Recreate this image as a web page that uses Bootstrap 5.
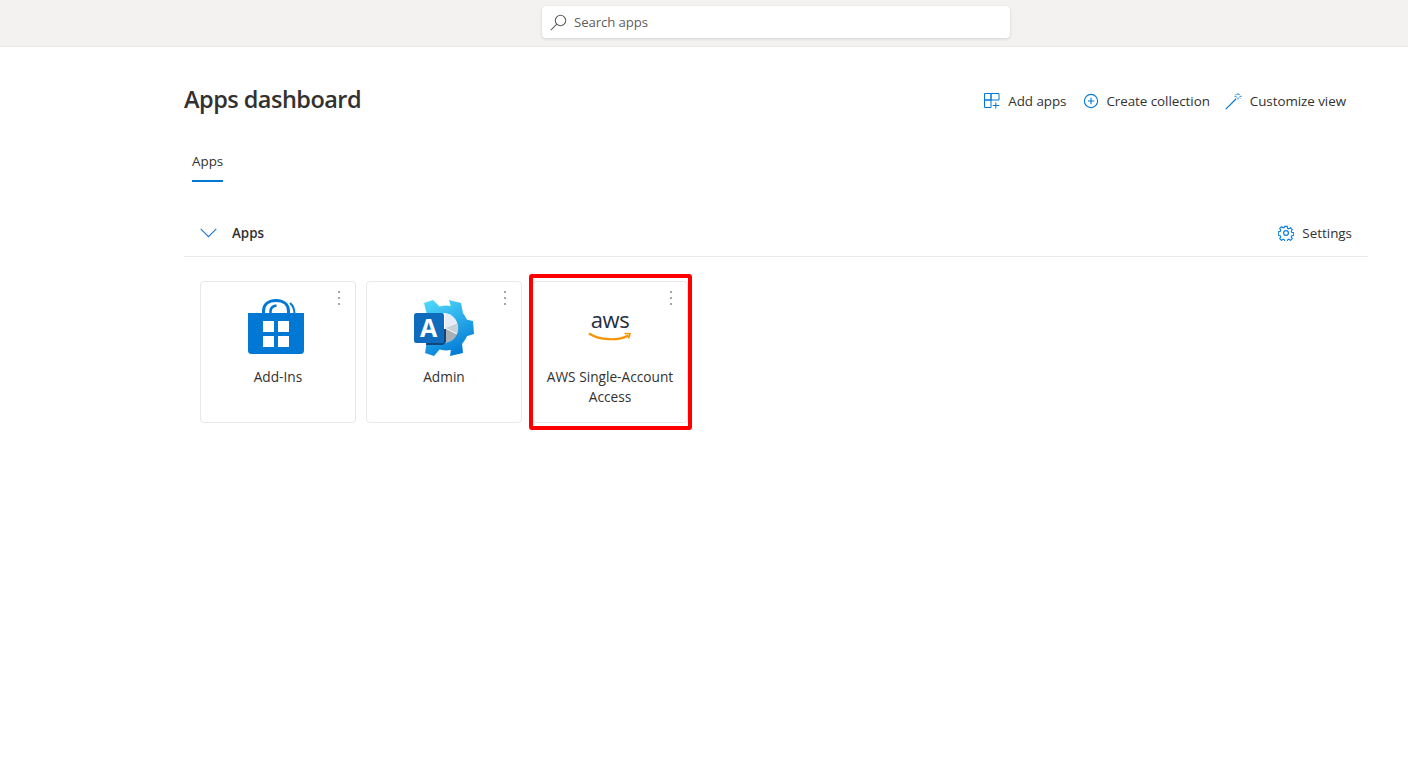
<!DOCTYPE html>
<html lang="en">
<head>
<meta charset="utf-8">
<title>Apps dashboard</title>
<link href="https://cdn.jsdelivr.net/npm/bootstrap@5.3.0/dist/css/bootstrap.min.css" rel="stylesheet">
<style>
html,body{height:100%;background:#fff}
body{font-family:"Open Sans","Noto Sans","Liberation Sans",sans-serif;font-size:14px;color:#323130;overflow:hidden}
.topstrip{height:47px;background:#f3f2f1;border-bottom:1px solid #e9e8e7;padding:6px 0 0 144px}
.searchbox{width:468px;height:32px;background:#fff;border-radius:4px;box-shadow:0 1px 3px rgba(0,0,0,.14);padding:1px 0 0 7px;gap:6px;color:#605e5c;font-size:13.2px;letter-spacing:-.1px}
.searchbox svg{margin-top:-1px}
.mainwrap{padding:0 40px 0 184px}
.headrow{height:106px}
.pagetitle{font-size:23.5px;font-weight:600;color:#323130;margin:0 0 2px;letter-spacing:-.52px}
.actionset{gap:15px;padding-right:22px;padding-top:3px}
.actionitem{gap:7px;font-size:13.4px;color:#323130;letter-spacing:-.05px}
.actionitem.firstaction{margin-right:2px}
.tabname{margin-left:8px;width:31px;height:29px;border-bottom:2px solid #0078d4;font-size:13.4px;line-height:16px;white-space:nowrap}
.sectionhead{margin-top:27px;height:48px;border-bottom:1px solid #edebe9;padding:1px 16px 0;font-size:13.4px}
.sectiontitle{font-weight:600;margin-left:15px}
.tilerow{gap:10px;padding:24px 0 0 16px}
.apptile{width:156px;height:142px;border:1px solid #e8e8e8;border-radius:4px;background:#fff;padding-top:17px;position:relative}
.tilelogo{height:58px;width:100%}
.tilename{font-size:13.7px;line-height:20px;margin-top:10px;padding:0 8px;text-align:center;color:#323130}
.tiledots{position:absolute;top:9px;right:15px;width:3px;display:flex;flex-direction:column;gap:4px;align-items:center}
.tiledots i{display:block;width:2px;height:2px;background:#8a8886;border-radius:50%}
.redmark{position:absolute;left:-4px;top:-8px;width:163px;height:156px;border:4px solid #fe0000;border-radius:3px;pointer-events:none}
.awsword{font-size:22px;line-height:22px;font-weight:500;color:#252f3e;letter-spacing:-.35px;font-family:"Open Sans",sans-serif}
.awslogo{padding-top:9px}
.awsarrow{margin-top:2px}
</style>
</head>
<body>
<header class="topstrip d-flex justify-content-center">
  <div class="searchbox d-flex align-items-center">
    <svg width="19" height="19" viewBox="0 0 19 19" fill="none" stroke="#605e5c" stroke-width="1.1"><circle cx="11.5" cy="7.500" r="5.200"/><path d="M7.800 11.200 1.800 17.200"/></svg>
    <span>Search apps</span>
  </div>
</header>

<main class="mainwrap">
  <div class="headrow d-flex justify-content-between align-items-center">
    <h1 class="pagetitle">Apps dashboard</h1>
    <div class="actionset d-flex align-items-center">
      <div class="actionitem firstaction d-flex align-items-center">
        <svg width="18" height="18" viewBox="0 0 18 18" fill="none" stroke="#0078d4" stroke-width="1"><path d="M1.500 1.500h6.500v6.500H1.500zM8 1.500h8v6.500H8zM1.500 8H8v7.500H1.500zM12.800 10.500v6M9.800 13.500h6.500"/></svg>
        <span>Add apps</span>
      </div>
      <div class="actionitem d-flex align-items-center">
        <svg width="16" height="16" viewBox="0 0 16 16" fill="none" stroke="#0078d4" stroke-width="1.1"><circle cx="8" cy="8" r="6.600"/><path d="M8 4.800v6.400M4.800 8h6.400"/></svg>
        <span>Create collection</span>
      </div>
      <div class="actionitem d-flex align-items-center">
        <svg width="18" height="18" viewBox="0 0 18 18" fill="none" stroke="#0078d4" stroke-width="1.200"><path d="M.8 17.200 11 7"/><path d="M13 1v2M13 5.500v2M9.500 4.300h2M14.500 4.300h2.200M10.600 2l1 1M14.600 2l-1 1M10.800 6.500l.8-.9M15.300 6.500l-.9-.9" stroke-width=".9"/></svg>
        <span>Customize view</span>
      </div>
    </div>
  </div>

  <div class="tabname">Apps</div>

  <div class="sectionhead d-flex align-items-center justify-content-between">
    <div class="d-flex align-items-center">
      <svg width="17" height="10" viewBox="0 0 17 10" fill="none" stroke="#1f78d1" stroke-width="1.100"><path d="M.7.8 8.500 8.600 16.300.8"/></svg>
      <span class="sectiontitle">Apps</span>
    </div>
    <div class="d-flex align-items-center gap-2">
      <svg width="16" height="16" viewBox="0 0 16 16" fill="none" stroke="#0f7fe0" stroke-width="1.200"><circle cx="8" cy="8" r="2.400"/><path d="M6.700 1h2.600l.4 2 1.300.6 1.800-1.100 1.800 1.800-1.100 1.800.6 1.300 2 .4v2.600l-2 .4-.6 1.300 1.100 1.800-1.800 1.800-1.800-1.100-1.300.6-.4 2H6.700l-.4-2-1.300-.6-1.800 1.100-1.800-1.800 1.100-1.800-.6-1.300-2-.4V6.700l2-.4.6-1.300-1.100-1.800 1.800-1.800 1.800 1.100 1.300-.6z" transform="translate(.4 .4) scale(.95)"/></svg>
      <span>Settings</span>
    </div>
  </div>

  <div class="tilerow d-flex">
    <div class="apptile">
      <div class="tiledots"><i></i><i></i><i></i></div>
      <div class="tilelogo d-flex justify-content-center">
        <svg width="60" height="56" viewBox="0 0 60 56" fill="none">
          <path d="M15.500 15V12C15.500 5 21 1.500 28 1.500S40.500 5 40.500 12V15" stroke="#0078d4" stroke-width="3"/>
          <path d="M22.500 15V12.500C22.500 9 25 7 28.500 6.500" stroke="#0078d4" stroke-width="2.500"/>
          <path d="M42 4C45 6.500 46.500 10 46.500 15" stroke="#0078d4" stroke-width="2"/>
          <path d="M0 14H56V51.500A3.500 3.500 0 0 1 52.500 55H3.500A3.500 3.500 0 0 1 0 51.500Z" fill="#0078d4"/>
          <path d="M15 22H26V33H15ZM30 22H41V33H30ZM15 37H26V48H15ZM30 37H41V48H30Z" fill="#fff"/>
        </svg>
      </div>
      <div class="tilename">Add-Ins</div>
    </div>

    <div class="apptile">
      <div class="tiledots"><i></i><i></i><i></i></div>
      <div class="tilelogo d-flex justify-content-center">
        <svg width="62" height="58" viewBox="0 0 62 58" fill="none">
          <defs>
            <linearGradient id="gearfill" gradientUnits="userSpaceOnUse" x1="18" y1="1" x2="44" y2="57"><stop offset="0" stop-color="#4fd8fb"/><stop offset="1" stop-color="#0078d4"/></linearGradient>
          </defs>
          <g fill="url(#gearfill)">
            <circle cx="33" cy="29" r="22.500"/>
            <path d="M11 4 20 1 27 8 14 16Z"/>
            <path d="M36 1 48 4 50 14 38 8Z"/>
            <path d="M51 20 60 22 61 35 51 38Z"/>
            <path d="M38 50 49 44 50 54 37 57Z"/>
            <path d="M14 42 27 50 21 57 12 54Z"/>
          </g>
          <path d="M30 14A15 15 0 0 1 30 44Z" fill="#fff"/>
          <path d="M32 14.200A15 15 0 0 1 44 23.500L32 29Z" fill="#e4edf7"/>
          <path d="M32.500 29 44.300 24A15 15 0 0 1 44.200 34.500Z" fill="#c8d1d8"/>
          <path d="M32 29.500 44 35.500A15 15 0 0 1 32 43.800Z" fill="#a8b0b6"/>
          <path d="M13 46H30L33 43V30L30 30V44H13Z" fill="#10467c"/>
          <rect x="1" y="14" width="30" height="30" rx="2.500" fill="#0f6cbd"/>
          <text x="15.500" y="38" text-anchor="middle" font-family="Open Sans,sans-serif" font-weight="700" font-size="25" fill="#fff">A</text>
        </svg>
      </div>
      <div class="tilename">Admin</div>
    </div>

    <div class="apptile">
      <div class="redmark"></div>
      <div class="tiledots"><i></i><i></i><i></i></div>
      <div class="tilelogo awslogo d-flex flex-column align-items-center">
        <span class="awsword">aws</span>
        <svg class="awsarrow" width="44" height="10" viewBox="0 0 44 10" fill="none"><path d="M1 1.500C12 8.500 30 9 40.500 3.500" stroke="#f79400" stroke-width="2.200"/><path d="M36.500 1.500 42 1.800 40.500 6.500" stroke="#f79400" stroke-width="1.600"/></svg>
      </div>
      <div class="tilename">AWS Single-Account Access</div>
    </div>
  </div>
</main>
<script src="https://cdn.jsdelivr.net/npm/bootstrap@5.3.0/dist/js/bootstrap.bundle.min.js"></script>
</body>
</html>
